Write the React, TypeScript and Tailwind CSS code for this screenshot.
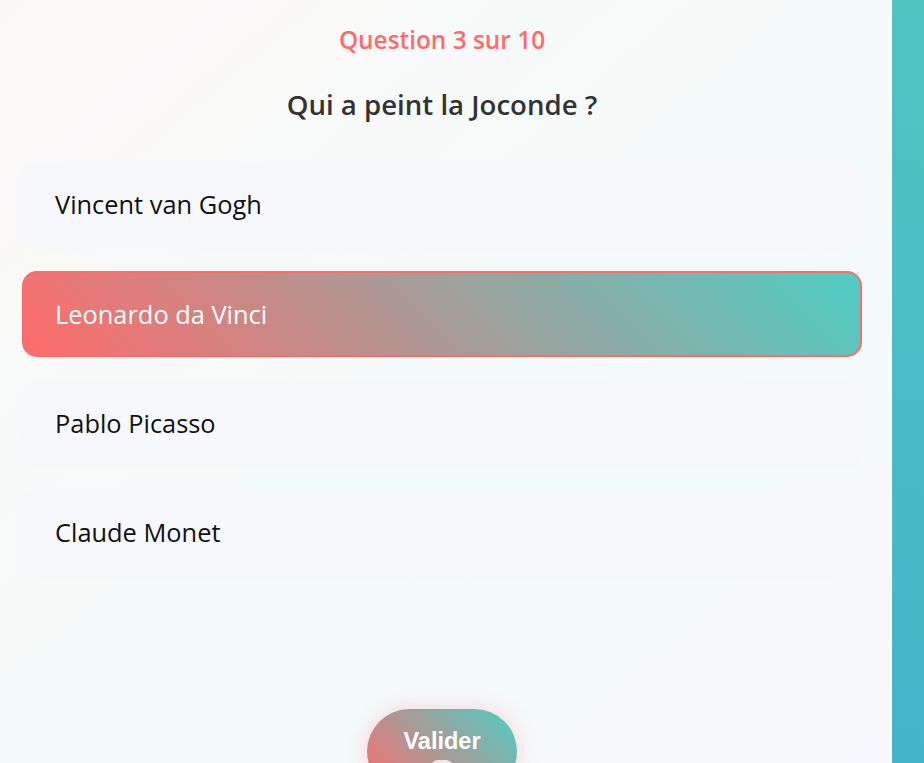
import React from 'react';

const options = ['Vincent van Gogh', 'Leonardo da Vinci', 'Pablo Picasso', 'Claude Monet'];

const App = () => {
  const selected = 1;

  return (
    <div className="flex h-[763px] w-[924px] overflow-hidden bg-gradient-to-b from-[#4ec5c1] to-[#44b4c9]">
      <div
        className="flex w-[892px] shrink-0 flex-col items-center bg-gradient-to-br from-[#fdf8f8] via-[#f4fbfa] to-[#f6f9fd] pl-[22px] pr-[30px] pt-[24px]"
        style={{ fontFamily: '"Open Sans", "Noto Sans", sans-serif' }}
      >
        <div className="text-[24.4px] font-semibold leading-[32px] text-[#ff6b6b]">Question 3 sur 10</div>
        <h2 className="mt-[30px] text-[27.6px] font-semibold leading-[36px] text-[#333333]">Qui a peint la Joconde ?</h2>

        <div className="mt-[40px] flex w-full flex-col gap-[24px]">
          {options.map((opt, i) =>
            i === selected ? (
              <div
                key={opt}
                className="flex h-[86px] items-center rounded-[15px] border-2 border-[#ff6b6b] bg-[linear-gradient(45deg,#ff6b6b,#4ecdc4)] pl-[31px] text-[25.4px] text-white"
              >
                {opt}
              </div>
            ) : (
              <div
                key={opt}
                className="flex h-[85px] items-center rounded-[15px] bg-[#f7f8fb] pl-[33px] text-[25.4px] text-[#111111] shadow-[0_1px_4px_rgba(0,0,0,0.015)]"
              >
                {opt}
              </div>
            )
          )}
        </div>

        <button
          className="mt-[134px] flex flex-col items-center rounded-full bg-[linear-gradient(45deg,#ff6b6b,#4ecdc4)] px-[36px] pt-[16px] pb-[14px] text-[23.5px] font-bold leading-[32px] text-white shadow-[0_0_22px_rgba(255,107,107,0.28)]"
          style={{ fontFamily: '"Liberation Sans", Arial, sans-serif' }}
        >
          Valider
          <span className="mt-[3px] block h-[20px] w-[22px] rounded-[7px] bg-[#e8eaec]" />
        </button>
      </div>
    </div>
  );
};

export default App;
